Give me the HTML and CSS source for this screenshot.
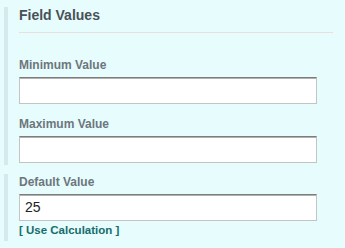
FILE: index.html
```html
<!DOCTYPE html>
<html>
<head>
<meta charset="utf-8">
<link rel="stylesheet" href="styles.css">
</head>
<body>
<div class="panel">
  <section class="group">
    <h2 class="title">Field Values</h2>
    <div class="field first">
      <label class="label">Minimum Value</label>
      <input class="input" type="text" value="">
    </div>
    <div class="field">
      <label class="label">Maximum Value</label>
      <input class="input" type="text" value="">
    </div>
  </section>
  <section class="group second">
    <div class="field">
      <label class="label">Default Value</label>
      <input class="input" type="text" value="25">
      <a class="link" href="#">[ Use Calculation ]</a>
    </div>
  </section>
</div>
</body>
</html>
```
FILE: styles.css
```css
html, body {
  margin: 0;
  padding: 0;
  background: #e6fcfd;
}
body {
  font-family: "Liberation Sans", Arial, sans-serif;
  width: 345px;
  height: 248px;
  overflow: hidden;
}
.panel {
  padding: 7px 12px 0 4px;
  display: flex;
  flex-direction: column;
  gap: 9px;
}
.group {
  border-left: 4px solid #d4ebed;
  padding: 0 0 2px 11px;
}
.group.second {
  padding-top: 1.5px;
  padding-bottom: 4px;
}
.title {
  margin: 0;
  font-size: 14px;
  line-height: 17px;
  font-weight: bold;
  color: #4a5056;
  padding-bottom: 8px;
  border-bottom: 1px solid #e7dfe0;
}
.field {
  display: flex;
  flex-direction: column;
  align-items: flex-start;
  margin-top: 13.5px;
}
.field.first {
  margin-top: 25px;
}
.group.second .field {
  margin-top: 0;
}
.label {
  font-size: 12px;
  line-height: 15px;
  font-weight: bold;
  color: #6d767c;
  margin-bottom: 3.5px;
}
.input {
  box-sizing: border-box;
  width: 298px;
  height: 27px;
  margin: 0;
  padding: 0 5px;
  background: #fff;
  border: 1px solid #c4c4c4;
  border-top: 1px solid #7d7d7d;
  box-shadow: inset 0 1px 0 #b0b0b0;
  font-family: "Liberation Sans", Arial, sans-serif;
  font-size: 14px;
  color: #222;
  outline: none;
}
.link {
  margin-top: 3px;
  font-size: 11.5px;
  line-height: 13px;
  font-weight: bold;
  color: #186b6b;
  text-decoration: none;
}
```
